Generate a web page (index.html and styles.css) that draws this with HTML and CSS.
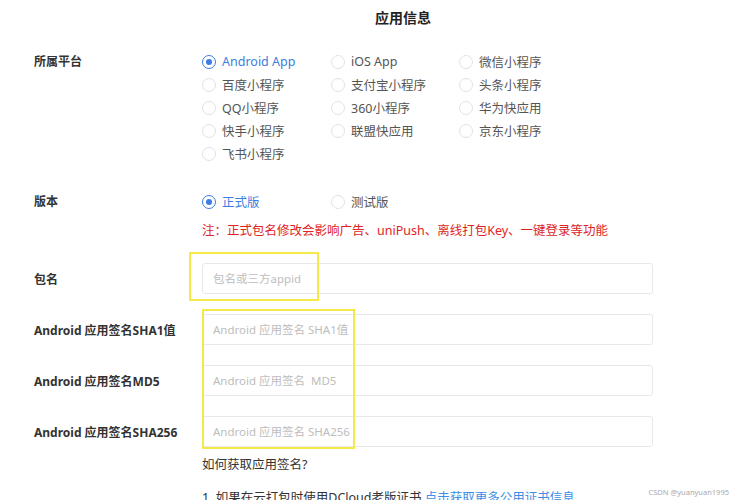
FILE: index.html
```html
<!DOCTYPE html>
<html lang="zh-CN">
<head>
  <meta charset="UTF-8">
  <title>应用信息</title>
  <link rel="stylesheet" href="styles.css">
</head>
<body>

  <div class="page">
    <h2 class="title">应用信息</h2>

    <!-- 所属平台 -->
    <div class="form-row platform-row">
      <div class="label">所属平台</div>
      <div class="radio-grid">
        <label class="radio checked"><span class="dot"></span>Android App</label>
        <label class="radio"><span class="dot"></span>iOS App</label>
        <label class="radio"><span class="dot"></span>微信小程序</label>
        <label class="radio"><span class="dot"></span>百度小程序</label>
        <label class="radio"><span class="dot"></span>支付宝小程序</label>
        <label class="radio"><span class="dot"></span>头条小程序</label>
        <label class="radio"><span class="dot"></span>QQ小程序</label>
        <label class="radio"><span class="dot"></span>360小程序</label>
        <label class="radio"><span class="dot"></span>华为快应用</label>
        <label class="radio"><span class="dot"></span>快手小程序</label>
        <label class="radio"><span class="dot"></span>联盟快应用</label>
        <label class="radio"><span class="dot"></span>京东小程序</label>
        <label class="radio"><span class="dot"></span>飞书小程序</label>
      </div>
    </div>

    <!-- 版本 -->
    <div class="form-row version-row">
      <div class="label">版本</div>
      <div class="field">
        <div class="radio-grid">
          <label class="radio checked"><span class="dot"></span>正式版</label>
          <label class="radio"><span class="dot"></span>测试版</label>
        </div>
        <p class="note">注：正式包名修改会影响广告、uniPush、离线打包Key、一键登录等功能</p>
      </div>
    </div>

    <div class="inputs">
      <div class="form-row input-row">
        <div class="label">包名</div>
        <input type="text" placeholder="包名或三方appid">
      </div>
      <div class="form-row input-row">
        <div class="label">Android 应用签名SHA1值</div>
        <input type="text" placeholder="Android 应用签名 SHA1值">
      </div>
      <div class="form-row input-row">
        <div class="label">Android 应用签名MD5</div>
        <input type="text" placeholder="Android 应用签名  MD5">
      </div>
      <div class="form-row input-row">
        <div class="label">Android 应用签名SHA256</div>
        <input type="text" placeholder="Android 应用签名 SHA256">
      </div>

      <!-- highlight boxes drawn over the inputs -->
      <div class="mark mark-pkg"></div>
      <div class="mark mark-sign"></div>
    </div>

    <div class="help">
      <p class="help-title">如何获取应用签名?</p>
      <p class="help-item">1. 如果在云打包时使用DCloud老版证书 <a href="#">点击获取更多公用证书信息</a></p>
    </div>
  </div>

  <div class="watermark">CSDN @yuanyuan1995</div>

</body>
</html>
```

FILE: styles.css
```css
body {
  margin: 0;
  font-family: "Noto Sans", "Noto Sans CJK SC", sans-serif;
  color: #333;
  background: #fff;
  overflow: hidden;
}

.page {
  padding: 0 0 0 34px;
}

.title {
  margin: 0;
  padding: 8px 0 0 341px;
  font-size: 14px;
  font-weight: bold;
  line-height: 20px;
  color: #222;
}

.form-row {
  display: flex;
  align-items: flex-start;
}

.label {
  width: 168px;
  flex-shrink: 0;
  font-size: 12px;
  font-weight: bold;
  color: #333;
}

.platform-row {
  margin-top: 22px;
}

.platform-row .label,
.version-row .label {
  line-height: 23px;
}

.radio-grid {
  display: grid;
  grid-template-columns: 129px 128px 128px;
}

.radio {
  display: flex;
  align-items: center;
  height: 23px;
  font-size: 12.5px;
  color: #555;
  white-space: nowrap;
}

.dot {
  width: 12px;
  height: 12px;
  border: 1px solid #e2e2e2;
  border-radius: 50%;
  margin-right: 6px;
  box-sizing: content-box;
  position: relative;
}

.radio.checked {
  color: #3b7ee0;
}

.radio.checked .dot {
  border-color: #3b7ee0;
}

.radio.checked .dot::after {
  content: "";
  position: absolute;
  left: 3px;
  top: 3px;
  width: 6px;
  height: 6px;
  border-radius: 50%;
  background: #3b7ee0;
}

.version-row {
  margin-top: 25px;
}

.note {
  margin: 9px 0 0;
  font-size: 12.5px;
  line-height: 18px;
  color: #e02424;
}

.inputs {
  position: relative;
  margin-top: 23px;
}

.input-row {
  align-items: center;
  height: 31px;
  margin-bottom: 20px;
}

.input-row input {
  width: 451px;
  height: 31px;
  box-sizing: border-box;
  padding: 0 10px;
  border: 1px solid #e8e8e8;
  border-radius: 3px;
  font-family: inherit;
  font-size: 11.5px;
  outline: none;
}

.input-row input::placeholder {
  color: #bdbdbd;
}

.mark {
  position: absolute;
  border: 2px solid #f3ea47;
}

.mark-pkg {
  left: 155px;
  top: -11px;
  width: 126px;
  height: 45px;
}

.mark-sign {
  left: 168px;
  top: 46px;
  width: 149px;
  height: 136px;
}

.help {
  margin-top: -11px;
  padding-left: 168px;
}

.help p {
  margin: 0;
  font-size: 12.5px;
  color: #333;
}

.help-title {
  line-height: 18px;
}

.help-item {
  margin-top: 15px !important;
  line-height: 18px;
}

.help-item a {
  color: #3b8ee8;
  text-decoration: none;
}

.watermark {
  position: absolute;
  right: 5px;
  bottom: 3px;
  font-size: 7.5px;
  color: #aaa;
}
```
